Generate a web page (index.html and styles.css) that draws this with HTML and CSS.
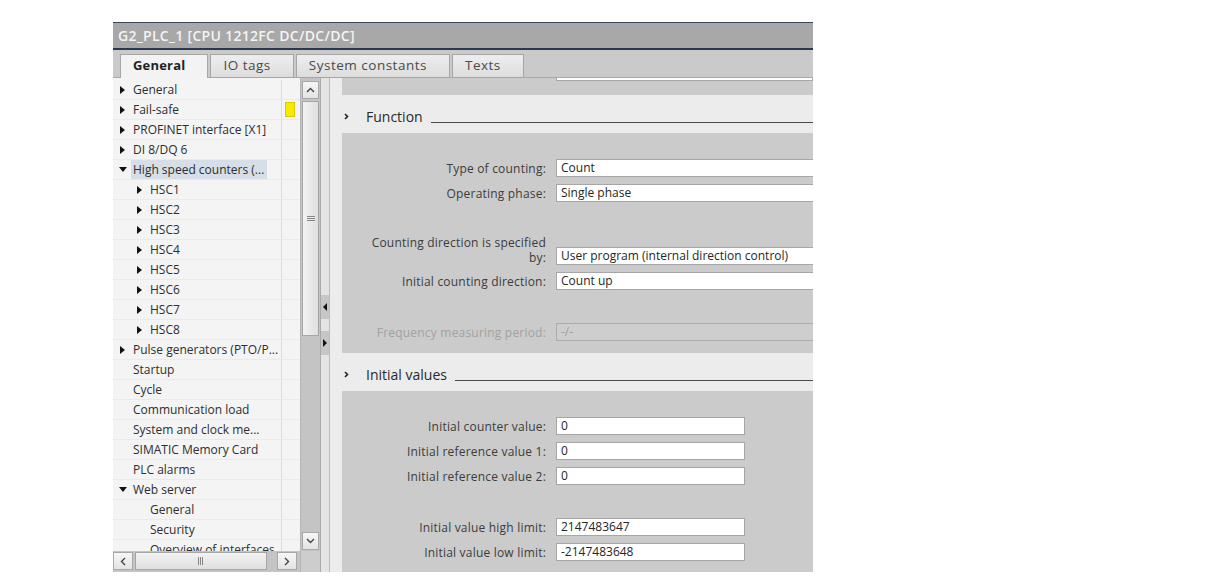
FILE: index.html
```html
<!DOCTYPE html>
<html lang="en">
<head>
    <meta charset="UTF-8">
    <title>G2_PLC_1 properties</title>
    <link rel="stylesheet" href="styles.css">
</head>
<body>

    <div class="window">

        <div class="titlebar">G2_PLC_1 [CPU 1212FC DC/DC/DC]</div>

        <div class="tabbar">
            <div class="tab active">General</div>
            <div class="tab">IO tags</div>
            <div class="tab">System constants</div>
            <div class="tab">Texts</div>
        </div>

        <div class="body">

            <!-- left: navigation tree -->
            <div class="nav">
                <div class="tree">
                    <div class="row"><div class="name"><span class="tw closed"></span><span class="label">General</span></div><div class="stat"></div></div>
                    <div class="row"><div class="name"><span class="tw closed"></span><span class="label">Fail-safe</span></div><div class="stat"><span class="flag"></span></div></div>
                    <div class="row"><div class="name"><span class="tw closed"></span><span class="label">PROFINET interface [X1]</span></div><div class="stat"></div></div>
                    <div class="row"><div class="name"><span class="tw closed"></span><span class="label">DI 8/DQ 6</span></div><div class="stat"></div></div>
                    <div class="row"><div class="name"><span class="tw open"></span><span class="label sel">High speed counters (...</span></div><div class="stat"></div></div>
                    <div class="row"><div class="name sub"><span class="tw closed"></span><span class="label">HSC1</span></div><div class="stat"></div></div>
                    <div class="row"><div class="name sub"><span class="tw closed"></span><span class="label">HSC2</span></div><div class="stat"></div></div>
                    <div class="row"><div class="name sub"><span class="tw closed"></span><span class="label">HSC3</span></div><div class="stat"></div></div>
                    <div class="row"><div class="name sub"><span class="tw closed"></span><span class="label">HSC4</span></div><div class="stat"></div></div>
                    <div class="row"><div class="name sub"><span class="tw closed"></span><span class="label">HSC5</span></div><div class="stat"></div></div>
                    <div class="row"><div class="name sub"><span class="tw closed"></span><span class="label">HSC6</span></div><div class="stat"></div></div>
                    <div class="row"><div class="name sub"><span class="tw closed"></span><span class="label">HSC7</span></div><div class="stat"></div></div>
                    <div class="row"><div class="name sub"><span class="tw closed"></span><span class="label">HSC8</span></div><div class="stat"></div></div>
                    <div class="row"><div class="name"><span class="tw closed"></span><span class="label">Pulse generators (PTO/P...</span></div><div class="stat"></div></div>
                    <div class="row"><div class="name"><span class="tw"></span><span class="label">Startup</span></div><div class="stat"></div></div>
                    <div class="row"><div class="name"><span class="tw"></span><span class="label">Cycle</span></div><div class="stat"></div></div>
                    <div class="row"><div class="name"><span class="tw"></span><span class="label">Communication load</span></div><div class="stat"></div></div>
                    <div class="row"><div class="name"><span class="tw"></span><span class="label">System and clock me...</span></div><div class="stat"></div></div>
                    <div class="row"><div class="name"><span class="tw"></span><span class="label">SIMATIC Memory Card</span></div><div class="stat"></div></div>
                    <div class="row"><div class="name"><span class="tw"></span><span class="label">PLC alarms</span></div><div class="stat"></div></div>
                    <div class="row"><div class="name"><span class="tw open"></span><span class="label">Web server</span></div><div class="stat"></div></div>
                    <div class="row"><div class="name sub"><span class="tw"></span><span class="label">General</span></div><div class="stat"></div></div>
                    <div class="row"><div class="name sub"><span class="tw"></span><span class="label">Security</span></div><div class="stat"></div></div>
                    <div class="row"><div class="name sub"><span class="tw"></span><span class="label">Overview of interfaces</span></div><div class="stat"></div></div>
                </div>

                <div class="vscroll">
                    <div class="sb-btn">
                        <svg width="9" height="6" viewBox="0 0 9 6"><polyline points="1,5 4.5,1.5 8,5" fill="none" stroke="#444" stroke-width="1.4"/></svg>
                    </div>
                    <div class="thumb v">
                        <svg width="8" height="6" viewBox="0 0 8 6"><path d="M0 0.5H8M0 2.5H8M0 4.5H8" stroke="#888" stroke-width="1"/></svg>
                    </div>
                    <div class="track"></div>
                    <div class="sb-btn">
                        <svg width="9" height="6" viewBox="0 0 9 6"><polyline points="1,1 4.5,4.5 8,1" fill="none" stroke="#444" stroke-width="1.4"/></svg>
                    </div>
                </div>

                <div class="hscroll">
                    <div class="sb-btn">
                        <svg width="6" height="9" viewBox="0 0 6 9"><polyline points="5,1 1.5,4.5 5,8" fill="none" stroke="#444" stroke-width="1.4"/></svg>
                    </div>
                    <div class="thumb h">
                        <svg width="6" height="8" viewBox="0 0 6 8"><path d="M0.5 0V8M2.5 0V8M4.5 0V8" stroke="#888" stroke-width="1"/></svg>
                    </div>
                    <div class="track"></div>
                    <div class="sb-btn">
                        <svg width="6" height="9" viewBox="0 0 6 9"><polyline points="1,1 4.5,4.5 1,8" fill="none" stroke="#444" stroke-width="1.4"/></svg>
                    </div>
                </div>

                <div class="corner"></div>
            </div>

            <!-- splitter -->
            <div class="splitter">
                <div class="split-btn"><span class="arrow left"></span></div>
                <div class="split-btn"><span class="arrow right"></span></div>
            </div>

            <!-- right: properties -->
            <div class="props">

                <div class="block top">
                    <div class="clip-field"></div>
                </div>

                <div class="sec-head">
                    <span class="chev"><svg width="5" height="7" viewBox="0 0 5 7"><polyline points="1,1 3.5,3.5 1,6" fill="none" stroke="#222" stroke-width="1.6"/></svg></span>
                    <span class="sec-title">Function</span>
                    <span class="rule"></span>
                </div>

                <div class="block">
                    <div class="field">
                        <div class="lbl">Type of counting:</div>
                        <div class="input">Count</div>
                    </div>
                    <div class="field">
                        <div class="lbl">Operating phase:</div>
                        <div class="input">Single phase</div>
                    </div>
                    <div class="field spaced bottom">
                        <div class="lbl two">Counting direction is specified<br>by:</div>
                        <div class="input">User program (internal direction control)</div>
                    </div>
                    <div class="field">
                        <div class="lbl">Initial counting direction:</div>
                        <div class="input">Count up</div>
                    </div>
                    <div class="field spaced">
                        <div class="lbl off">Frequency measuring period:</div>
                        <div class="input off">-/-</div>
                    </div>
                </div>

                <div class="sec-head">
                    <span class="chev"><svg width="5" height="7" viewBox="0 0 5 7"><polyline points="1,1 3.5,3.5 1,6" fill="none" stroke="#222" stroke-width="1.6"/></svg></span>
                    <span class="sec-title">Initial values</span>
                    <span class="rule"></span>
                </div>

                <div class="block">
                    <div class="field">
                        <div class="lbl">Initial counter value:</div>
                        <div class="input short">0</div>
                    </div>
                    <div class="field">
                        <div class="lbl">Initial reference value 1:</div>
                        <div class="input short">0</div>
                    </div>
                    <div class="field">
                        <div class="lbl">Initial reference value 2:</div>
                        <div class="input short">0</div>
                    </div>
                    <div class="field spaced">
                        <div class="lbl">Initial value high limit:</div>
                        <div class="input short">2147483647</div>
                    </div>
                    <div class="field">
                        <div class="lbl">Initial value low limit:</div>
                        <div class="input short">-2147483648</div>
                    </div>
                </div>

            </div>
        </div>
    </div>

</body>
</html>
```

FILE: styles.css
```css
body {
    margin: 0;
    background: #fff;
    font-family: "Open Sans", "Noto Sans", sans-serif;
    font-size: 12px;
    color: #333;
}

.window {
    margin: 22px 0 0 113px;
    width: 700px;
    height: 550px;
    display: flex;
    flex-direction: column;
    overflow: hidden;
}


/* title + tabs */
.titlebar {
    height: 25px;
    line-height: 25px;
    padding-left: 5px;
    background: #a8a8a8;
    border-top: 1px solid #3b4661;
    border-bottom: 2px solid #2b3852;
    color: #f4f4f4;
    font-size: 14px;
    font-weight: 600;
    letter-spacing: 0.3px;
    white-space: nowrap;
}

.tabbar {
    height: 28px;
    box-sizing: border-box;
    padding: 4px 0 0 7px;
    display: flex;
    gap: 2px;
    background: #cacaca;
    box-shadow: inset 0 -1px #a9a9a9;
}

.tab {
    height: 24px;
    box-sizing: border-box;
    padding: 0 22px 0 12px;
    line-height: 21px;
    font-size: 13.5px;
    letter-spacing: 0.5px;
    color: #4a4a4a;
    background: linear-gradient(#eeeeee, #dddddd);
    border: 1px solid #a6a6a6;
}

.tab.active {
    background: #f3f3f3;
    border-bottom: none;
    color: #222;
    font-size: 13px;
    font-weight: 700;
    letter-spacing: 0.2px;
}


.body {
    flex: 1;
    display: flex;
    min-height: 0;
}


/* navigation tree */
.nav {
    width: 207px;
    display: grid;
    grid-template-columns: 187px 20px;
    grid-template-rows: 1fr 21px;
}

.tree {
    background: #f4f4f4;
    padding-top: 2px;
    overflow: hidden;
}

.row {
    display: grid;
    grid-template-columns: 169px 18px;
    height: 20px;
}

.name {
    display: flex;
    align-items: center;
    padding-left: 7px;
    border-bottom: 1px solid #eaeaea;
    border-right: 1px solid #dcdcdc;
    white-space: nowrap;
    overflow: hidden;
    color: #2e2e2e;
}

.name.sub {
    padding-left: 24px;
}

.stat {
    display: flex;
    align-items: center;
    padding-left: 3px;
    border-bottom: 1px solid #eaeaea;
}

.flag {
    width: 10px;
    height: 15px;
    box-sizing: border-box;
    background: #f7ea00;
    border: 1px solid #d8c800;
}

.tw {
    width: 13px;
    flex: none;
    display: flex;
    align-items: center;
}

.tw.closed::before {
    content: "";
    border-left: 5px solid #111;
    border-top: 4px solid transparent;
    border-bottom: 4px solid transparent;
}

.tw.open::before {
    content: "";
    margin-left: -1px;
    border-top: 5px solid #111;
    border-left: 4px solid transparent;
    border-right: 4px solid transparent;
}

.label {
    line-height: 19px;
}

.label.sel {
    background: #d6dee8;
    padding: 0 3px 0 2px;
    margin-left: -2px;
}


/* scrollbars */
.vscroll {
    display: flex;
    flex-direction: column;
    gap: 2px;
    padding: 3px 1px 1px 1px;
    background: #c4c4c4;
    border-left: 1px solid #b6b6b6;
}

.hscroll {
    display: flex;
    gap: 2px;
    padding: 1px 3px 2px 0;
    background: #c4c4c4;
}

.corner {
    background: #cdcdcd;
    border-left: 1px solid #b6b6b6;
}

.sb-btn {
    flex: none;
    height: 18px;
    width: 20px;
    box-sizing: border-box;
    display: flex;
    align-items: center;
    justify-content: center;
    background: linear-gradient(#f6f6f6, #e4e4e4);
    border: 1px solid #a8a8a8;
}

.vscroll .sb-btn {
    width: auto;
}

.thumb {
    flex: none;
    box-sizing: border-box;
    display: flex;
    align-items: center;
    justify-content: center;
    border: 1px solid #a6a6a6;
}

.thumb.v {
    height: 235px;
    background: linear-gradient(to right, #f2f2f2, #dfdfdf);
}

.thumb.h {
    width: 132px;
    background: linear-gradient(#f2f2f2, #dfdfdf);
}

.track {
    flex: 1;
}


/* splitter between panes */
.splitter {
    width: 10px;
    box-sizing: border-box;
    background: #e4e4e4;
    border-left: 1px solid #a9a9a9;
    border-right: 1px solid #bcbcbc;
    display: flex;
    flex-direction: column;
    padding-top: 217px;
    gap: 12px;
}

.split-btn {
    height: 24px;
    background: #c6c6c6;
    display: flex;
    align-items: center;
    justify-content: center;
}

.arrow {
    border-top: 4px solid transparent;
    border-bottom: 4px solid transparent;
}

.arrow.left {
    border-right: 4px solid #111;
}

.arrow.right {
    border-left: 4px solid #111;
}


/* property sheet */
.props {
    flex: 1;
    background: #ececec;
    padding-left: 12px;
    overflow: hidden;
}

.block {
    background: #cbcbcb;
    padding: 26px 0 12px 0;
}

.block.top {
    height: 17px;
    padding: 0;
}

.clip-field {
    margin-left: 214px;
    height: 2px;
    background: #fff;
    border: 1px solid #a6a6a6;
    border-top: none;
}

.sec-head {
    height: 38px;
    box-sizing: border-box;
    padding-top: 5px;
    display: flex;
    align-items: center;
}

.chev {
    width: 24px;
    padding-left: 2px;
    box-sizing: border-box;
    display: flex;
}

.sec-title {
    font-size: 14px;
    color: #2a2a2a;
}

.rule {
    flex: 1;
    height: 1px;
    margin: 12px 0 0 8px;
    background: #4a4a4a;
}

.field {
    display: flex;
    align-items: center;
    margin-top: 7px;
}

.field:first-child {
    margin-top: 0;
}

.field.spaced {
    margin-top: 33px;
}

.field.bottom {
    align-items: flex-end;
}

.lbl {
    width: 214px;
    flex: none;
    box-sizing: border-box;
    padding-right: 10px;
    text-align: right;
    letter-spacing: 0.2px;
    color: #3c3c3c;
    white-space: nowrap;
}

.lbl.two {
    line-height: 15px;
}

.lbl.off {
    color: #a2a2a2;
}

.input {
    width: 400px;
    flex: none;
    height: 18px;
    box-sizing: border-box;
    padding-left: 4px;
    line-height: 16px;
    background: #fff;
    border: 1px solid #a6a6a6;
    color: #262626;
    white-space: nowrap;
}

.input.short {
    width: 189px;
}

.input.off {
    background: #cecece;
    border-color: #acacac;
    color: #9e9e9e;
}
```
